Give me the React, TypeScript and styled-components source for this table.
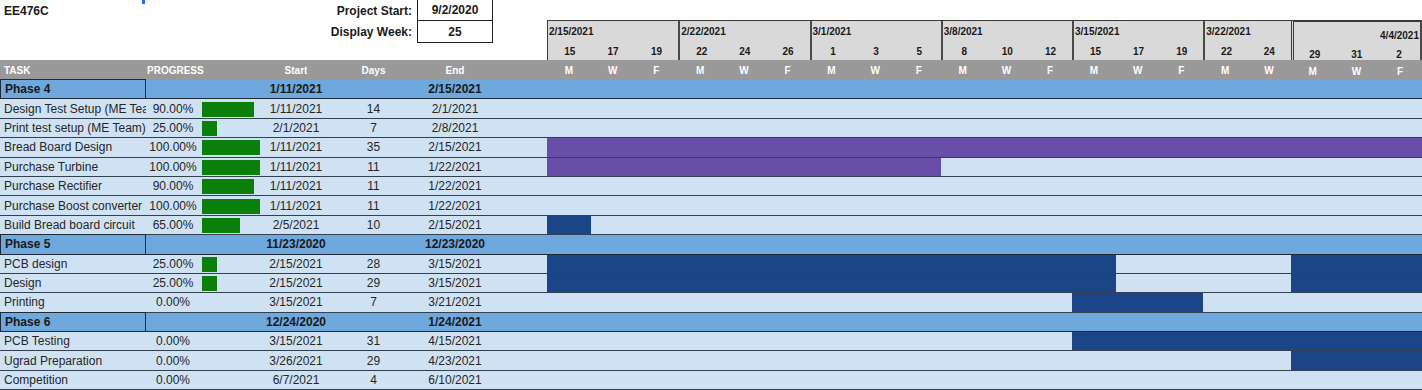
import React from "react";
import styled, { createGlobalStyle, css } from "styled-components";

const GlobalStyle = createGlobalStyle`
  html, body {
    margin: 0;
    padding: 0;
    background: #ffffff;
  }
  body {
    font-family: "Liberation Sans", Arial, sans-serif;
  }
`;

// widths of the table columns, the chart takes the rest
const COLS = "146px 54px 62px 68px 87px 76px 54px 1fr";
const DAYS = 40;

type Bar = [number, number];

type Row = {
  kind: "phase" | "task";
  name: string;
  pct?: number;
  start: string;
  days?: number;
  end: string;
  color?: "purple" | "navy";
  bars?: Bar[];
};

type Week = {
  label: string;
  days: number;
  nums: string[];
  letters: string[];
  last?: boolean;
};

const weeks: Week[] = [
  { label: "2/15/2021", days: 6, nums: ["15", "17", "19"], letters: ["M", "W", "F"] },
  { label: "2/22/2021", days: 6, nums: ["22", "24", "26"], letters: ["M", "W", "F"] },
  { label: "3/1/2021", days: 6, nums: ["1", "3", "5"], letters: ["M", "W", "F"] },
  { label: "3/8/2021", days: 6, nums: ["8", "10", "12"], letters: ["M", "W", "F"] },
  { label: "3/15/2021", days: 6, nums: ["15", "17", "19"], letters: ["M", "W", "F"] },
  { label: "3/22/2021", days: 4, nums: ["22", "24"], letters: ["M", "W"] },
  { label: "4/4/2021", days: 6, nums: ["29", "31", "2"], letters: ["M", "W", "F"], last: true },
];

const rows: Row[] = [
  { kind: "phase", name: "Phase 4", start: "1/11/2021", end: "2/15/2021" },
  { kind: "task", name: "Design Test Setup (ME Team)", pct: 90, start: "1/11/2021", days: 14, end: "2/1/2021" },
  { kind: "task", name: "Print test setup (ME Team)", pct: 25, start: "2/1/2021", days: 7, end: "2/8/2021" },
  { kind: "task", name: "Bread Board Design", pct: 100, start: "1/11/2021", days: 35, end: "2/15/2021", color: "purple", bars: [[0, 40]] },
  { kind: "task", name: "Purchase Turbine", pct: 100, start: "1/11/2021", days: 11, end: "1/22/2021", color: "purple", bars: [[0, 18]] },
  { kind: "task", name: "Purchase Rectifier", pct: 90, start: "1/11/2021", days: 11, end: "1/22/2021" },
  { kind: "task", name: "Purchase Boost converter", pct: 100, start: "1/11/2021", days: 11, end: "1/22/2021" },
  { kind: "task", name: "Build Bread board circuit", pct: 65, start: "2/5/2021", days: 10, end: "2/15/2021", color: "navy", bars: [[0, 2]] },
  { kind: "phase", name: "Phase 5", start: "11/23/2020", end: "12/23/2020" },
  { kind: "task", name: "PCB design", pct: 25, start: "2/15/2021", days: 28, end: "3/15/2021", color: "navy", bars: [[0, 26], [34, 6]] },
  { kind: "task", name: "Design", pct: 25, start: "2/15/2021", days: 29, end: "3/15/2021", color: "navy", bars: [[0, 26], [34, 6]] },
  { kind: "task", name: "Printing", pct: 0, start: "3/15/2021", days: 7, end: "3/21/2021", color: "navy", bars: [[24, 6]] },
  { kind: "phase", name: "Phase 6", start: "12/24/2020", end: "1/24/2021" },
  { kind: "task", name: "PCB Testing", pct: 0, start: "3/15/2021", days: 31, end: "4/15/2021", color: "navy", bars: [[24, 16]] },
  { kind: "task", name: "Ugrad Preparation", pct: 0, start: "3/26/2021", days: 29, end: "4/23/2021", color: "navy", bars: [[34, 6]] },
  { kind: "task", name: "Competition", pct: 0, start: "6/7/2021", days: 4, end: "6/10/2021" },
];

const Sheet = styled.div`
  position: relative;
  width: 1422px;
  height: 390px;
  overflow: hidden;
  background: #ffffff;
  color: #262626;
`;

const SelectHandle = styled.span`
  position: absolute;
  left: 142px;
  top: 0;
  width: 3px;
  height: 4px;
  background: #1a73e8;
`;

const TopBand = styled.div`
  display: grid;
  grid-template-columns: 547px 1fr;
  height: 60px;
`;

const InfoGrid = styled.div`
  display: grid;
  grid-template-columns: 200px 217px 76px;
  grid-template-rows: 21px 22px;
  align-items: center;
`;

const Title = styled.div`
  padding-left: 4px;
  font-size: 12px;
  font-weight: bold;
  color: #1a1a1a;
`;

const InfoLabel = styled.div`
  text-align: right;
  padding-right: 5px;
  font-size: 12px;
  font-weight: bold;
  color: #1a1a1a;
`;

const ValueBox = styled.div`
  height: 100%;
  box-sizing: border-box;
  border: 1px solid #222;
  border-top: none;
  display: flex;
  align-items: center;
  justify-content: center;
  font-size: 12px;
  font-weight: bold;
  color: #1a1a1a;
`;

const Timeline = styled.div`
  display: grid;
  grid-template-columns: repeat(${DAYS}, 1fr);
  padding-top: 20px;
`;

const WeekBox = styled.div<{ $days: number; $last?: boolean }>`
  grid-column: span ${(p) => p.$days};
  box-sizing: border-box;
  height: 40px;
  background: #d9d9d9;
  border-top: 1px solid #3a3a3a;
  border-left: 2px solid #4a4a4a;
  display: grid;
  grid-template-rows: 20px 20px;
  ${(p) =>
    p.$last &&
    css`
      border-left: 3px double #3a3a3a;
      border-top: 2px solid #3a3a3a;
      border-right: 2px solid #4a4a4a;
      padding-top: 2px;
    `}
  &:first-child {
    border-left: 1px solid #3a3a3a;
  }
`;

const WeekLabel = styled.div<{ $right?: boolean }>`
  display: flex;
  align-items: center;
  justify-content: ${(p) => (p.$right ? "flex-end" : "flex-start")};
  padding: ${(p) => (p.$right ? "3px 1px 0 0" : "0 0 0 1px")};
  font-size: 10px;
  font-weight: bold;
  color: #1a1a1a;
`;

const DayNums = styled.div<{ $count: number }>`
  display: grid;
  grid-template-columns: repeat(${(p) => p.$count}, 1fr);
`;

const DayNum = styled.div`
  display: flex;
  align-items: center;
  justify-content: center;
  font-size: 10px;
  font-weight: bold;
  color: #1a1a1a;
`;

const Line = styled.div<{ $kind: "head" | "phase" | "task" }>`
  display: grid;
  grid-template-columns: ${COLS};
  box-sizing: border-box;
  height: ${(p) => (p.$kind === "head" ? "20px" : "19.4px")};
  align-items: stretch;
  ${(p) =>
    p.$kind === "head" &&
    css`
      background: #999999;
      color: #ffffff;
      font-size: 10px;
      font-weight: bold;
    `}
  ${(p) =>
    p.$kind === "phase" &&
    css`
      background: #6fa8dc;
      font-size: 12px;
      font-weight: bold;
      color: #1a1a1a;
      border-bottom: 1px solid #1f2a36;
    `}
  ${(p) =>
    p.$kind === "task" &&
    css`
      background: #cfe2f3;
      font-size: 12px;
      color: #262626;
      border-bottom: 1px solid #33404d;
    `}
`;

const Cell = styled.div<{ $align?: "left" | "center" }>`
  display: flex;
  align-items: center;
  justify-content: ${(p) => (p.$align === "center" ? "center" : "flex-start")};
  white-space: nowrap;
  min-width: 0;
`;

const NameCell = styled.div<{ $boxed?: boolean }>`
  display: flex;
  align-items: center;
  padding-left: 4px;
  white-space: nowrap;
  overflow: hidden;
  box-sizing: border-box;
  ${(p) =>
    p.$boxed &&
    css`
      border: 1px solid #1f2a36;
      border-bottom: none;
      margin-top: -1px;
    `}
`;

const HeadCell = styled.div<{ $align?: "left" | "center"; $pad?: number }>`
  display: flex;
  align-items: center;
  justify-content: ${(p) => (p.$align === "center" ? "center" : "flex-start")};
  padding-left: ${(p) => p.$pad ?? 0}px;
  white-space: nowrap;
`;

const BarCell = styled.div`
  display: flex;
  align-items: center;
  padding-left: 2px;
`;

const Progress = styled.div`
  height: 15px;
  margin-top: 1px;
  background: #0a7f0a;
`;

const Chart = styled.div`
  display: grid;
  grid-template-columns: repeat(${DAYS}, 1fr);
`;

const Span = styled.div<{ $from: number; $len: number; $color: "purple" | "navy" }>`
  grid-row: 1;
  grid-column: ${(p) => p.$from + 1} / span ${(p) => p.$len};
  background: ${(p) => (p.$color === "purple" ? "#674ea7" : "#1c4587")};
`;

const DayLetter = styled.div<{ $low?: boolean }>`
  grid-column: span 2;
  display: flex;
  align-items: center;
  justify-content: center;
  padding-top: ${(p) => (p.$low ? "3px" : "0")};
`;

export default function App() {
  return (
    <Sheet>
      <GlobalStyle />
      <SelectHandle />
      <TopBand>
        <InfoGrid>
          <Title>EE476C</Title>
          <InfoLabel>Project Start:</InfoLabel>
          <ValueBox>9/2/2020</ValueBox>
          <div />
          <InfoLabel>Display Week:</InfoLabel>
          <ValueBox>25</ValueBox>
        </InfoGrid>
        <Timeline>
          {weeks.map((w) => (
            <WeekBox key={w.label} $days={w.days} $last={w.last}>
              <WeekLabel $right={w.last}>{w.label}</WeekLabel>
              <DayNums $count={w.nums.length}>
                {w.nums.map((n) => (
                  <DayNum key={n}>{n}</DayNum>
                ))}
              </DayNums>
            </WeekBox>
          ))}
        </Timeline>
      </TopBand>

      <Line $kind="head">
        <HeadCell $pad={4}>TASK</HeadCell>
        <HeadCell $pad={1}>PROGRESS</HeadCell>
        <div />
        <HeadCell $align="center">Start</HeadCell>
        <HeadCell $align="center">Days</HeadCell>
        <HeadCell $align="center">End</HeadCell>
        <div />
        <Chart>
          {weeks.map((w) =>
            w.letters.map((l, i) => (
              <DayLetter key={w.label + i} $low={w.last}>
                {l}
              </DayLetter>
            ))
          )}
        </Chart>
      </Line>

      {rows.map((r) =>
        r.kind === "phase" ? (
          <Line key={r.name} $kind="phase">
            <NameCell $boxed>{r.name}</NameCell>
            <div />
            <div />
            <Cell $align="center">{r.start}</Cell>
            <div />
            <Cell $align="center">{r.end}</Cell>
            <div />
            <Chart />
          </Line>
        ) : (
          <Line key={r.name} $kind="task">
            <NameCell>{r.name}</NameCell>
            <Cell $align="center">{(r.pct ?? 0).toFixed(2)}%</Cell>
            <BarCell>
              {r.pct ? <Progress style={{ width: `${(r.pct / 100) * 58}px` }} /> : null}
            </BarCell>
            <Cell $align="center">{r.start}</Cell>
            <Cell $align="center">{r.days}</Cell>
            <Cell $align="center">{r.end}</Cell>
            <div />
            <Chart>
              {(r.bars ?? []).map(([from, len]) => (
                <Span key={from} $from={from} $len={len} $color={r.color ?? "navy"} />
              ))}
            </Chart>
          </Line>
        )
      )}
    </Sheet>
  );
}
